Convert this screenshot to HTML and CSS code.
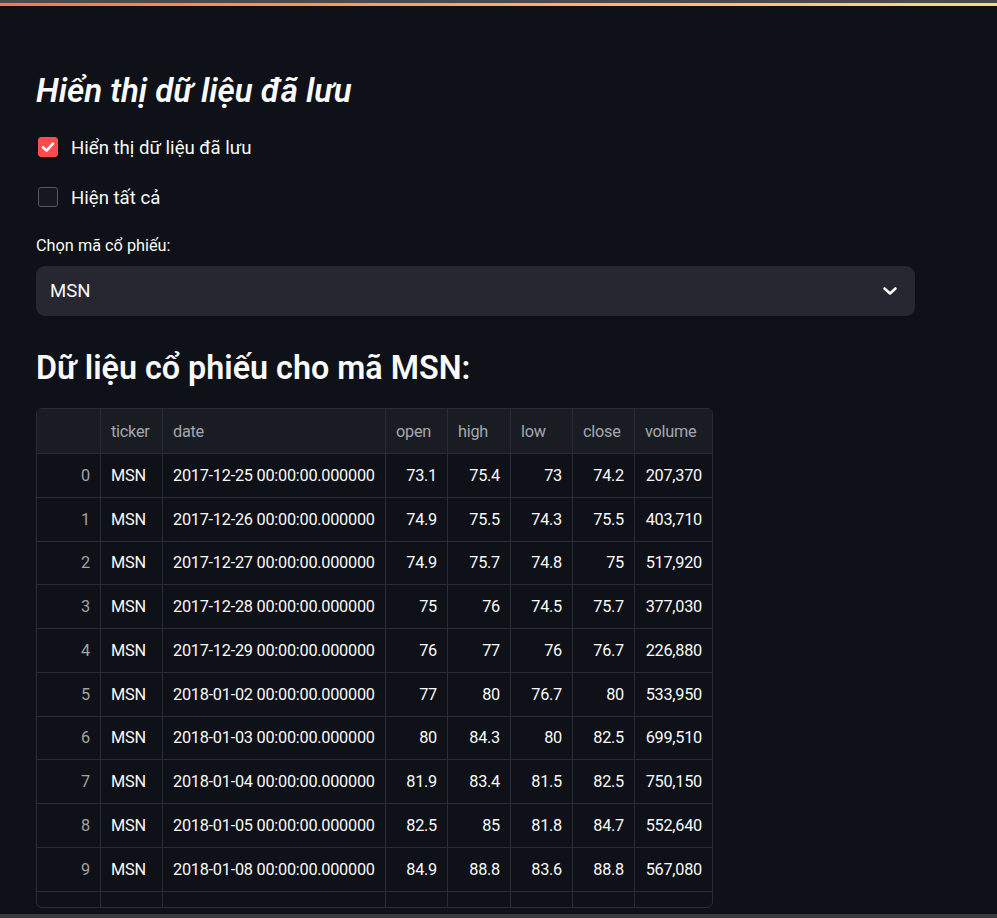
FILE: index.html
```html
<!DOCTYPE html>
<html lang="vi">
<head>
<meta charset="utf-8">
<title>Dữ liệu cổ phiếu</title>
<link rel="stylesheet" href="styles.css">
</head>
<body>
<div class="topbar"><div class="topbar-gray"></div><div class="topbar-grad"></div></div>
<main class="main">
  <h3 class="title"><em>Hiển thị dữ liệu đã lưu</em></h3>
  <label class="check first">
    <span class="box checked"><svg width="20" height="20" viewBox="0 0 20 20"><polyline points="5,10.2 8.6,13.6 15,6.6" fill="none" stroke="#ffffff" stroke-width="2.6" stroke-linecap="round" stroke-linejoin="round"/></svg></span>
    <span class="check-label">Hiển thị dữ liệu đã lưu</span>
  </label>
  <label class="check">
    <span class="box"></span>
    <span class="check-label">Hiện tất cả</span>
  </label>
  <div class="field-label">Chọn mã cổ phiếu:</div>
  <div class="select">
    <span class="select-value">MSN</span>
    <svg class="chevron" width="16" height="10" viewBox="0 0 16 10"><polyline points="2.5,2.5 8,7.5 13.5,2.5" fill="none" stroke="#fafafa" stroke-width="2.6" stroke-linecap="round" stroke-linejoin="round"/></svg>
  </div>
  <h2 class="subheader">Dữ liệu cổ phiếu cho mã MSN:</h2>
  <div class="grid">
    <div class="row head">
      <div class="cell"></div>
      <div class="cell">ticker</div>
      <div class="cell">date</div>
      <div class="cell">open</div>
      <div class="cell">high</div>
      <div class="cell">low</div>
      <div class="cell">close</div>
      <div class="cell last">volume</div>
    </div>
    <div class="row"><div class="cell idx">0</div><div class="cell">MSN</div><div class="cell">2017-12-25 00:00:00.000000</div><div class="cell num">73.1</div><div class="cell num">75.4</div><div class="cell num">73</div><div class="cell num">74.2</div><div class="cell num last">207,370</div></div>
    <div class="row"><div class="cell idx">1</div><div class="cell">MSN</div><div class="cell">2017-12-26 00:00:00.000000</div><div class="cell num">74.9</div><div class="cell num">75.5</div><div class="cell num">74.3</div><div class="cell num">75.5</div><div class="cell num last">403,710</div></div>
    <div class="row"><div class="cell idx">2</div><div class="cell">MSN</div><div class="cell">2017-12-27 00:00:00.000000</div><div class="cell num">74.9</div><div class="cell num">75.7</div><div class="cell num">74.8</div><div class="cell num">75</div><div class="cell num last">517,920</div></div>
    <div class="row"><div class="cell idx">3</div><div class="cell">MSN</div><div class="cell">2017-12-28 00:00:00.000000</div><div class="cell num">75</div><div class="cell num">76</div><div class="cell num">74.5</div><div class="cell num">75.7</div><div class="cell num last">377,030</div></div>
    <div class="row"><div class="cell idx">4</div><div class="cell">MSN</div><div class="cell">2017-12-29 00:00:00.000000</div><div class="cell num">76</div><div class="cell num">77</div><div class="cell num">76</div><div class="cell num">76.7</div><div class="cell num last">226,880</div></div>
    <div class="row"><div class="cell idx">5</div><div class="cell">MSN</div><div class="cell">2018-01-02 00:00:00.000000</div><div class="cell num">77</div><div class="cell num">80</div><div class="cell num">76.7</div><div class="cell num">80</div><div class="cell num last">533,950</div></div>
    <div class="row"><div class="cell idx">6</div><div class="cell">MSN</div><div class="cell">2018-01-03 00:00:00.000000</div><div class="cell num">80</div><div class="cell num">84.3</div><div class="cell num">80</div><div class="cell num">82.5</div><div class="cell num last">699,510</div></div>
    <div class="row"><div class="cell idx">7</div><div class="cell">MSN</div><div class="cell">2018-01-04 00:00:00.000000</div><div class="cell num">81.9</div><div class="cell num">83.4</div><div class="cell num">81.5</div><div class="cell num">82.5</div><div class="cell num last">750,150</div></div>
    <div class="row"><div class="cell idx">8</div><div class="cell">MSN</div><div class="cell">2018-01-05 00:00:00.000000</div><div class="cell num">82.5</div><div class="cell num">85</div><div class="cell num">81.8</div><div class="cell num">84.7</div><div class="cell num last">552,640</div></div>
    <div class="row"><div class="cell idx">9</div><div class="cell">MSN</div><div class="cell">2018-01-08 00:00:00.000000</div><div class="cell num">84.9</div><div class="cell num">88.8</div><div class="cell num">83.6</div><div class="cell num">88.8</div><div class="cell num last">567,080</div></div>
    <div class="row"><div class="cell idx"></div><div class="cell"></div><div class="cell"></div><div class="cell num"></div><div class="cell num"></div><div class="cell num"></div><div class="cell num"></div><div class="cell num last"></div></div>
  </div>
</main>
<div class="bottombar"></div>
</body>
</html>
```
FILE: styles.css
```css
* { box-sizing: border-box; }
html, body { margin: 0; padding: 0; }
body {
  background: #0e1117;
  color: #fafafa;
  font-family: Roboto, "Noto Sans", sans-serif;
  height: 918px;
  overflow: hidden;
}
.topbar-gray { height: 3px; background: #4a4a4c; }
.topbar-grad { height: 3px; background: linear-gradient(90deg, #fb745c 0%, #fdab69 50%, #fddc7c 100%); }
.main {
  margin-left: 36px;
  width: 879px;
  padding-top: 65px;
}
.title {
  margin: 0;
  font-size: 33px;
  line-height: 40px;
  font-weight: 600;
}
.title em { font-style: italic; }
.check {
  display: flex;
  align-items: flex-start;
  height: 30px;
  margin-top: 20px;
  gap: 13px;
}
.check.first { margin-top: 22px; }
.box {
  width: 20px;
  height: 20px;
  margin-top: 4px;
  margin-left: 2px;
  border-radius: 3px;
  border: 1px solid #55575f;
  background: #16181f;
  flex: none;
  display: flex;
}
.box.checked { background: #ff4b4b; border-color: #ff4b4b; }
.box.checked svg { margin: -1px; }
.check-label {
  font-size: 18.6px;
  line-height: 30px;
}
.field-label {
  margin-top: 22px;
  font-size: 16.3px;
  line-height: 22px;
}
.select {
  margin-top: 9px;
  height: 50px;
  background: #262730;
  border-radius: 9px;
  display: flex;
  align-items: center;
  justify-content: space-between;
  padding: 0 17px 0 14px;
}
.select-value { font-size: 18.6px; }
.subheader {
  margin: 30px 0 0;
  font-size: 32.3px;
  line-height: 44px;
  font-weight: 600;
}
.grid {
  margin-top: 18px;
  width: 677px;
  height: 500px;
  border: 1px solid #2a2c33;
  border-radius: 6px;
  overflow: hidden;
  font-size: 16.3px;
  letter-spacing: -0.25px;
}
.row {
  display: grid;
  grid-template-columns: 64px 62px 223px 62px 63px 62px 62px 77px;
  height: 43.75px;
}
.row.head { height: 45px; background: #1a1c23; color: #a4a7ae; }
.cell {
  border-right: 1px solid #2a2c33;
  border-bottom: 1px solid #2a2c33;
  display: flex;
  align-items: center;
  padding: 0 10px;
  white-space: nowrap;
  overflow: hidden;
}
.cell.last { border-right: none; }
.cell.num, .cell.idx { justify-content: flex-end; }
.cell.idx { color: #a0a3aa; }
.head .cell { justify-content: flex-start; }
.bottombar {
  position: fixed;
  left: 0;
  right: 0;
  bottom: 0;
  height: 4px;
  background: #3a3b3e;
}
```
